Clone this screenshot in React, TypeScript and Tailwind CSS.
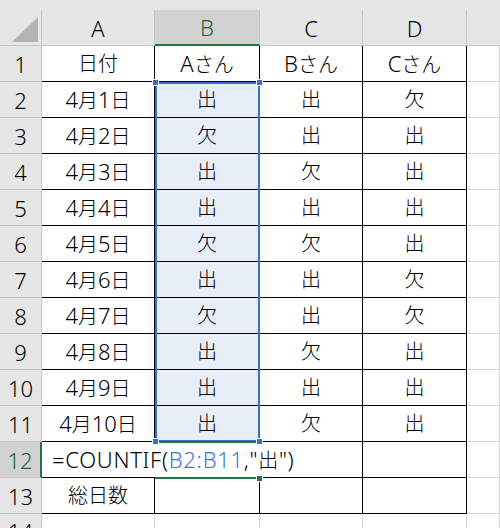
import React from "react";

const rows: string[][] = [
  ["日付", "Aさん", "Bさん", "Cさん"],
  ["4月1日", "出", "出", "欠"],
  ["4月2日", "欠", "出", "出"],
  ["4月3日", "出", "欠", "出"],
  ["4月4日", "出", "出", "出"],
  ["4月5日", "欠", "欠", "出"],
  ["4月6日", "出", "出", "欠"],
  ["4月7日", "欠", "出", "欠"],
  ["4月8日", "出", "欠", "出"],
  ["4月9日", "出", "出", "出"],
  ["4月10日", "出", "欠", "出"],
];

const font = { fontFamily: '"Noto Sans", "Noto Sans CJK JP", sans-serif' };

// Latin runs a bit larger than kanji, like Yu Gothic in Excel
const Txt = ({ s }: { s: string }) => {
  const parts = s.match(/[\x00-\x7f]+|[^\x00-\x7f]+/g) || [];
  return (
    <span className="whitespace-nowrap leading-none font-light">
      {parts.map((p, i) =>
        /^[\x00-\x7f]/.test(p) ? (
          <span key={i} className="text-[22px]">
            {p}
          </span>
        ) : (
          <span key={i} className="text-[20px]">
            {p}
          </span>
        )
      )}
    </span>
  );
};

const cell = "flex items-center justify-center border-r border-b text-black";
const head = `${cell} bg-[#e6e6e6] border-[#c6c6c6] text-[#262626]`;
const grid = "border-r border-b border-[#d4d4d4]";

const App = () => {
  return (
    <div
      className="relative w-[500px] h-[528px] overflow-hidden bg-[#e6e6e6] pt-[10px]"
      style={font}
    >
      <div className="grid grid-cols-[42px_113px_105px_103px_104px_33px] grid-rows-[36px_repeat(14,36px)] bg-white">
        {/* corner */}
        <div className="relative border-r border-b border-[#c6c6c6] bg-[#e6e6e6]">
          <svg className="absolute left-0 top-0" width="42" height="36">
            <polygon points="12,32 38,32 38,7" fill="#b4b4b4" />
          </svg>
        </div>
        {/* column headers */}
        <div className={head}>
          <Txt s="A" />
        </div>
        <div className="flex items-center justify-center border-r border-r-[#c6c6c6] border-b-2 border-b-[#217346] bg-[#d2d2d2] text-[#1d5e3a]">
          <Txt s="B" />
        </div>
        <div className={head}>
          <Txt s="C" />
        </div>
        <div className={head}>
          <Txt s="D" />
        </div>
        <div className="border-b border-[#c6c6c6] bg-[#e6e6e6]" />

        {/* rows 1-11 */}
        {rows.map((r, i) => (
          <React.Fragment key={i}>
            <div className={head}>
              <Txt s={String(i + 1)} />
            </div>
            {r.map((v, j) => (
              <div
                key={j}
                className={`${cell} border-black ${j === 1 && i > 0 ? "bg-[#e8eef8]" : "bg-white"}`}
              >
                <Txt s={v} />
              </div>
            ))}
            <div className={grid} />
          </React.Fragment>
        ))}

        {/* row 12 */}
        <div className="flex items-center justify-center border-r-2 border-r-[#217346] border-b border-b-[#c6c6c6] bg-[#d2d2d2] text-[#1d5e3a]">
          <Txt s="12" />
        </div>
        <div className="flex items-center border-b border-black pl-[10px] text-black">
          <span className="whitespace-nowrap leading-none font-light tracking-[0.7px]">
            <span className="text-[22px]">=COUNTIF(</span>
            <span className="text-[22px] text-[#3f78d4]">B2:B11</span>
            <span className="text-[22px]">,"</span>
            <span className="text-[20px]">出</span>
            <span className="text-[22px]">")</span>
          </span>
        </div>
        <div className="border-b border-black" />
        <div className="border-r border-b border-black" />
        <div className="border-r border-b border-black" />
        <div className={grid} />

        {/* row 13 */}
        <div className={head}>
          <Txt s="13" />
        </div>
        <div className={`${cell} border-black`}>
          <Txt s="総日数" />
        </div>
        <div className={`${cell} border-black`} />
        <div className={`${cell} border-black`} />
        <div className={`${cell} border-black`} />
        <div className={grid} />

        {/* row 14, cut off by the window */}
        <div className={`${head} items-start pt-[6px]`}>
          <Txt s="14" />
        </div>
        <div className={grid} />
        <div className={grid} />
        <div className={grid} />
        <div className={grid} />
        <div className={grid} />
      </div>

      {/* selection B2:B11 */}
      <div className="pointer-events-none absolute left-[155px] top-[82px] h-[360px] w-[105px] border-2 border-[#3a6fc8]" />
      {/* active cell B12 */}
      <div className="pointer-events-none absolute left-[155px] top-[441px] h-[38px] w-[105px] border-t-2 border-b-2 border-[#217346]" />
      {/* handles */}
      <div className="absolute left-[152px] top-[79px] h-[7px] w-[7px] bg-[#3a6fc8] border border-white" />
      <div className="absolute left-[256px] top-[79px] h-[7px] w-[7px] bg-[#3a6fc8] border border-white" />
      <div className="absolute left-[152px] top-[438px] h-[7px] w-[7px] bg-[#3a6fc8] border border-white" />
      <div className="absolute left-[256px] top-[438px] h-[7px] w-[7px] bg-[#3a6fc8] border border-white" />
      <div className="absolute left-[256px] top-[475px] h-[7px] w-[7px] bg-[#217346] border border-white" />
    </div>
  );
};

export default App;
